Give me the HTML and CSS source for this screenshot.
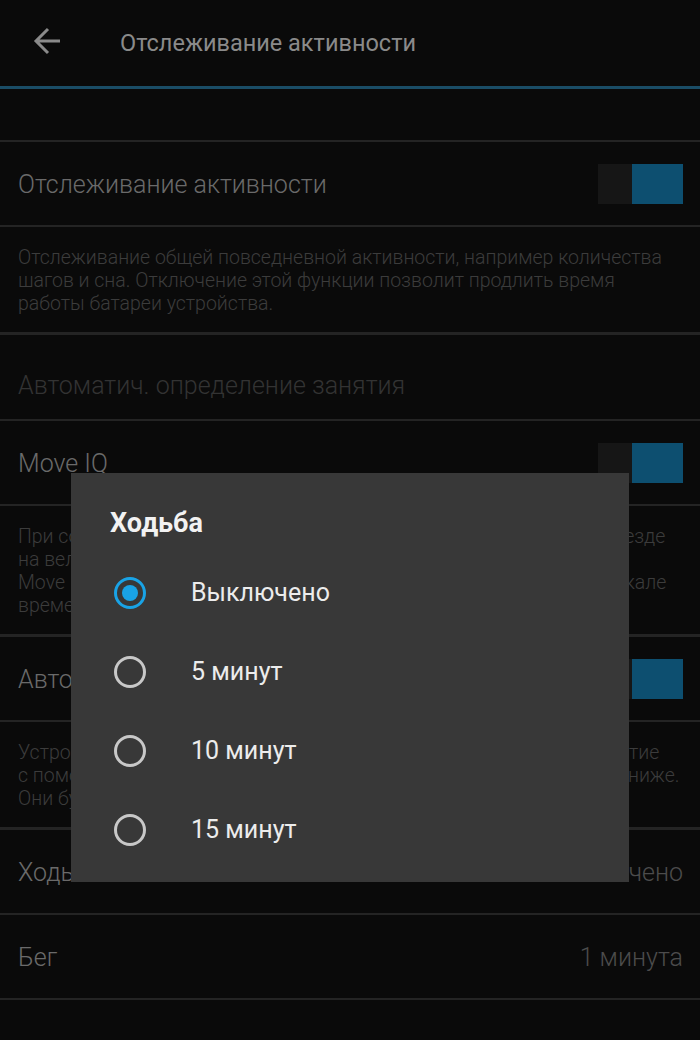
FILE: index.html
```html
<!DOCTYPE html>
<html>
<head>
    <title>Отслеживание активности</title>
    <link rel="stylesheet" href="styles.css">
</head>
<body>
<div class="toolbar">
    <svg class="back" width="28" height="28" viewBox="0 0 28 28">
        <path d="M27 14H3M15 2L3 14l12 12" fill="none" stroke="#8a8a8a" stroke-width="3"/>
    </svg>
    <span class="toolbar-title">Отслеживание активности</span>
</div>
<div class="toolbar-line"></div>

<div class="spacer"></div>
<div class="row">
    <span class="row-label">Отслеживание активности</span>
    <div class="switch"><span class="switch-off"></span><span class="switch-on"></span></div>
</div>
<div class="summary">
    Отслеживание общей повседневной активности, например количества<br>
    шагов и сна. Отключение этой функции позволит продлить время<br>
    работы батареи устройства.
</div>
<div class="category">Автоматич. определение занятия</div>
<div class="row">
    <span class="row-label">Move IQ</span>
    <div class="switch"><span class="switch-off"></span><span class="switch-on"></span></div>
</div>
<div class="summary">
    При совершении ходьбы, бега, плавания или гребли, а также и при езде<br>
    на велосипеде, или при тренировках на эллиптическом тренажере,<br>
    Move IQ автоматически определяет занятие и отображает его на шкале<br>
    времени.
</div>
<div class="row">
    <span class="row-label">Автоматический запуск занятия</span>
    <div class="switch"><span class="switch-off"></span><span class="switch-on"></span></div>
</div>
<div class="summary">
    Устройство может автоматически начинать и сохранять ваше занятие<br>
    с помощью функции Move IQ при достижении пороговых значений ниже.<br>
    Они будут отображаться в списке занятий.
</div>
<div class="row">
    <span class="row-label">Ходьба</span>
    <span class="row-value">Выключено</span>
</div>
<div class="row">
    <span class="row-label">Бег</span>
    <span class="row-value">1 минута</span>
</div>

<div class="dialog">
    <div class="dialog-title">Ходьба</div>
    <div class="option"><span class="radio checked"></span>Выключено</div>
    <div class="option"><span class="radio"></span>5 минут</div>
    <div class="option"><span class="radio"></span>10 минут</div>
    <div class="option"><span class="radio"></span>15 минут</div>
</div>
</body>
</html>
```

FILE: styles.css
```css
body {
    margin: 0;
    background-color: #0a0a0a;
    font-family: Roboto, "Noto Sans", sans-serif;
    font-weight: 300;
}

.toolbar {
    height: 86px;
    display: flex;
    align-items: center;
}

.back {
    margin-left: 33px;
    margin-right: 59px;
    margin-top: -4px;
}

.toolbar-title {
    font-size: 23.5px;
    font-weight: 400;
    color: #8a8a8a;
}

.toolbar-line {
    height: 3px;
    background-color: #1a4d66;
}

.spacer {
    height: 51px;
    border-bottom: 2px solid #242424;
}

.row {
    padding: 2px 17px 0 18px;
    box-sizing: border-box;
    height: 85px;
    display: flex;
    align-items: center;
    justify-content: space-between;
    border-bottom: 2px solid #242424;
}

.row-label {
    font-size: 25px;
    color: #6a6a6a;
}

.row-value {
    font-size: 25px;
    color: #4c4c4c;
}

.switch {
    display: flex;
    height: 40px;
    margin-top: -2px;
}

.switch-off {
    width: 34px;
    background-color: #161616;
}

.switch-on {
    width: 51px;
    background-color: #0d4f70;
}

.summary {
    padding: 19px 18px 17px;
    font-size: 19.5px;
    line-height: 23px;
    color: #3c3c3c;
    border-bottom: 3px solid #242424;
    white-space: nowrap;
    overflow: hidden;
}

.category {
    height: 86px;
    box-sizing: border-box;
    padding: 16px 0 0 18px;
    display: flex;
    align-items: center;
    font-size: 25px;
    color: #333;
    border-bottom: 2px solid #242424;
}

.dialog {
    position: absolute;
    left: 71px;
    top: 473px;
    width: 558px;
    height: 409px;
    box-sizing: border-box;
    padding-top: 34px;
    background-color: #383838;
}

.dialog-title {
    padding-left: 39px;
    font-size: 27px;
    font-weight: 700;
    color: #f2f2f2;
    height: 32px;
    line-height: 32px;
    margin-bottom: 14px;
}

.option {
    height: 79px;
    display: flex;
    align-items: center;
    font-size: 25px;
    font-weight: 400;
    color: #ececec;
}

.radio {
    width: 32px;
    height: 32px;
    margin-left: 43px;
    margin-right: 45px;
    border: 3px solid #c8c8c8;
    border-radius: 50%;
    box-sizing: border-box;
    position: relative;
}

.radio.checked {
    border-color: #19a3e6;
}

.radio.checked::after {
    content: "";
    position: absolute;
    left: 5px;
    top: 5px;
    width: 16px;
    height: 16px;
    border-radius: 50%;
    background-color: #19a3e6;
}
```
